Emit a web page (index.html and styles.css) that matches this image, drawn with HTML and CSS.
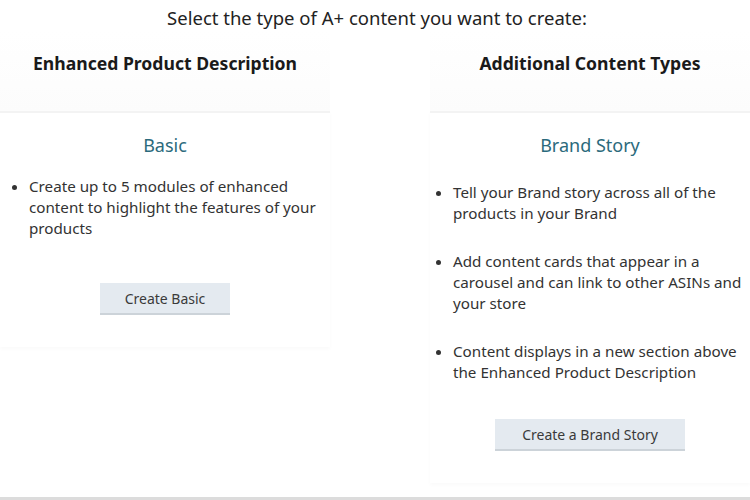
FILE: index.html
```html
<!DOCTYPE html>
<html>
<head>
    <title>A+ Content Manager</title>
    <link rel="stylesheet" href="styles.css">
</head>
<body>
    <h1 class="page-title">Select the type of A+ content you want to create:</h1>

    <div class="content-types">
        <section class="content-type basic">
            <h2>Enhanced Product Description</h2>
            <div class="type-card">
                <h3>Basic</h3>
                <ul class="type-features">
                    <li>Create up to 5 modules of enhanced content to highlight the features of your products</li>
                </ul>
                <button class="create-btn">Create Basic</button>
            </div>
        </section>

        <section class="content-type brand">
            <h2>Additional Content Types</h2>
            <div class="type-card">
                <h3>Brand Story</h3>
                <ul class="type-features spaced">
                    <li>Tell your Brand story across all of the products in your Brand</li>
                    <li>Add content cards that appear in a carousel and can link to other ASINs and your store</li>
                    <li>Content displays in a new section above the Enhanced Product Description</li>
                </ul>
                <button class="create-btn">Create a Brand Story</button>
            </div>
        </section>
    </div>
</body>
</html>
```

FILE: styles.css
```css
body {
    margin: 0;
    background: #fff;
    color: #333;
    font-family: 'Noto Sans', 'Open Sans', sans-serif;
    height: 500px;
    box-sizing: border-box;
    border-bottom: 3px solid #dcdcdc;
    overflow: hidden;
}
.page-title {
    font-size: 18.5px;
    font-weight: normal;
    color: #222;
    text-align: center;
    margin: 5px 0 0;
    line-height: 26px;
    padding-left: 4px;
}
.content-types {
    display: grid;
    grid-template-columns: 330px 320px;
    justify-content: space-between;
    align-items: start;
}
.content-type h2 {
    font-size: 17.6px;
    font-weight: bold;
    color: #1a1a1a;
    text-align: center;
    margin: 0;
    padding: 19px 0 35px;
    line-height: 26px;
    background: linear-gradient(#fff, #fcfcfc);
}
.type-card {
    border-top: 2px solid #f3f3f3;
    box-shadow: 0 2px 4px rgba(0, 0, 0, 0.025);
    padding: 19px 0 32px;
    display: flex;
    flex-direction: column;
    align-items: center;
}
.type-card h3 {
    font-size: 18px;
    font-weight: normal;
    color: #2b6a7c;
    margin: 0 0 18px;
    line-height: 26px;
}
.type-features {
    align-self: stretch;
    margin: 0;
    padding-left: 29px;
    font-size: 15.2px;
    line-height: 21px;
    color: #333;
}
.brand .type-features {
    padding-left: 23px;
    margin-top: 6px;
}
.type-features.spaced li + li {
    margin-top: 27px;
}
.create-btn {
    margin-top: 44px;
    background: #e4eaf0;
    border: none;
    border-bottom: 2px solid #ccd3d9;
    color: #3a3a3a;
    font-family: inherit;
    font-size: 14px;
    height: 32px;
    width: 130px;
    cursor: pointer;
}
.brand .create-btn {
    margin-top: 36px;
    width: 190px;
}
```
